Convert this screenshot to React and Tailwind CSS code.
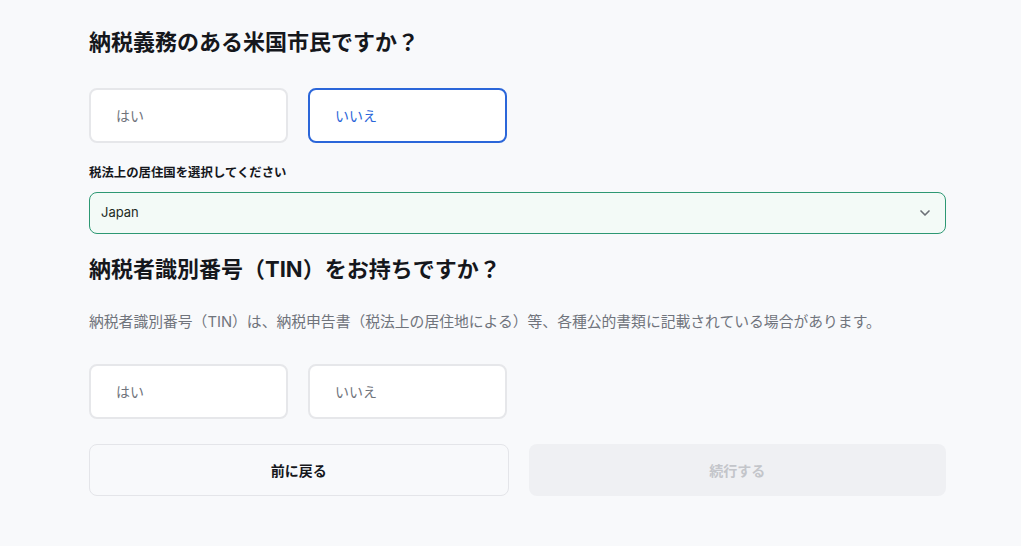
import { useState } from 'react';
import { ChevronDown } from 'lucide-react';

const ChoiceButton = ({ label, selected, onClick }) => (
  <button
    type="button"
    onClick={onClick}
    className={`w-[199px] h-[55px] rounded-lg border-2 bg-white pl-[25px] text-left text-[14px] ${
      selected ? 'border-[#2b66d9] text-[#2b66d9]' : 'border-[#e6e7ea] text-[#70747c]'
    }`}
  >
    {label}
  </button>
);

const App = () => {
  const [citizen, setCitizen] = useState('no');
  const [hasTin, setHasTin] = useState(null);

  return (
    <div
      className="min-h-[546px] bg-[#f8f9fb] text-[#15171c]"
      style={{ fontFamily: '"Inter", "Noto Sans CJK JP", sans-serif' }}
    >
      <div className="w-[857px] ml-[89px] pt-[24px]">
        {/* Q1 */}
        <h2 className="text-[22px] font-bold leading-[36px]">納税義務のある米国市民ですか？</h2>

        <div className="flex gap-[20px] mt-[28px]">
          <ChoiceButton label="はい" selected={citizen === 'yes'} onClick={() => setCitizen('yes')} />
          <ChoiceButton label="いいえ" selected={citizen === 'no'} onClick={() => setCitizen('no')} />
        </div>

        <div className="mt-[20px] text-[12.4px] font-semibold leading-[20px]">税法上の居住国を選択してください</div>

        <div className="mt-[9px] h-[42px] flex items-center justify-between rounded-lg border border-[#2d9873] bg-[#f3faf7] pl-[11px] pr-[12px]">
          <span className="text-[13px] text-[#1d2b24]">Japan</span>
          <ChevronDown className="w-[16px] h-[16px] text-[#6b6f76]" strokeWidth={2.5} />
        </div>

        {/* Q2 */}
        <h2 className="mt-[17px] text-[22px] font-bold leading-[36px]">納税者識別番号（TIN）をお持ちですか？</h2>

        <p className="mt-[23px] text-[14.8px] leading-[24px] text-[#70747c]">
          納税者識別番号（TIN）は、納税申告書（税法上の居住地による）等、各種公的書類に記載されている場合があります。
        </p>

        <div className="flex gap-[20px] mt-[30px]">
          <ChoiceButton label="はい" selected={hasTin === 'yes'} onClick={() => setHasTin('yes')} />
          <ChoiceButton label="いいえ" selected={hasTin === 'no'} onClick={() => setHasTin('no')} />
        </div>

        <div className="flex gap-[20px] mt-[25px]">
          <button
            type="button"
            className="flex-1 h-[52px] rounded-lg border border-[#e4e5e9] bg-[#f8f9fb] text-[14px] font-bold text-[#15171c]"
          >
            前に戻る
          </button>
          <button
            type="button"
            disabled
            className="flex-1 h-[52px] rounded-lg bg-[#eff0f3] text-[14px] font-bold text-[#c3c5ca]"
          >
            続行する
          </button>
        </div>
      </div>
    </div>
  );
};

export default App;
